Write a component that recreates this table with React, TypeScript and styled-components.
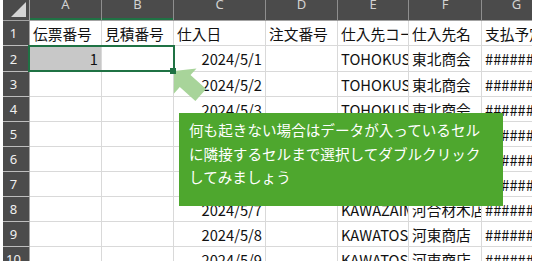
import React from "react";
import styled, { createGlobalStyle } from "styled-components";

const GlobalStyle = createGlobalStyle`
  html, body {
    margin: 0;
    padding: 0;
    background: #ffffff;
  }
  body {
    width: 538px;
    height: 266px;
    overflow: hidden;
  }
`;

const GREEN = "#1f7244";
const HEAD_BG = "#4b4b4b";
const GRID = "#d9d9d9";

const Page = styled.div`
  width: 538px;
  height: 266px;
  padding-left: 3px;
  box-sizing: border-box;
`;

const Sheet = styled.div`
  position: relative;
  width: 529px;
  height: 261px;
  overflow: hidden;
  display: grid;
  grid-template-columns: 27px 72px 72px 92px 72px 71px 73px 70px;
  grid-template-rows: 21px 25px 26px repeat(8, 25px);
  font-family: "Noto Sans CJK JP", "Noto Sans", sans-serif;
`;

const Corner = styled.div`
  box-sizing: border-box;
  background: ${HEAD_BG};
  border-right: 1px solid #a3a3a3;
  border-bottom: 1px solid #a3a3a3;
  display: flex;
  align-items: flex-end;
  justify-content: flex-end;
  padding: 0 3px 3px 0;
`;

const SelectAll = styled.span`
  width: 0;
  height: 0;
  border-left: 15px solid transparent;
  border-bottom: 15px solid #d4d4d4;
`;

const ColHead = styled.div<{ $active?: boolean }>`
  box-sizing: border-box;
  background: ${HEAD_BG};
  border-right: 1px solid #8e8e8e;
  border-bottom: 1px solid #a3a3a3;
  box-shadow: ${(p) => (p.$active ? `inset 0 -2px 0 ${GREEN}` : "none")};
  color: #d2d2d2;
  font-family: "Noto Sans", sans-serif;
  font-size: 13px;
  line-height: 13px;
  text-align: center;
  overflow: hidden;
  & > span {
    display: block;
    margin-top: -2px;
  }
`;

const RowHead = styled.div`
  box-sizing: border-box;
  background: ${HEAD_BG};
  border-right: 1px solid #a3a3a3;
  border-bottom: 1px solid #bdbdbd;
  color: #f0f0f0;
  font-family: "Noto Sans", sans-serif;
  font-size: 13px;
  display: flex;
  align-items: center;
  justify-content: center;
  padding-right: 5px;
`;

const Cell = styled.div<{ $align?: "left" | "right"; $fill?: string }>`
  box-sizing: border-box;
  background: ${(p) => p.$fill ?? "#ffffff"};
  border-right: 1px solid ${GRID};
  border-bottom: 1px solid ${GRID};
  color: #111111;
  font-size: 14.7px;
  white-space: nowrap;
  overflow: hidden;
  display: flex;
  align-items: center;
  justify-content: ${(p) => (p.$align === "right" ? "flex-end" : "flex-start")};
  padding: 0 3px;
`;

/* selection rectangle and fill handle float over the A2:B2 cells */
const Selection = styled.div`
  position: absolute;
  left: 25px;
  top: 45px;
  width: 147px;
  height: 27px;
  box-sizing: border-box;
  border: 2px solid ${GREEN};
  pointer-events: none;
`;

const FillHandle = styled.span`
  position: absolute;
  right: -3px;
  bottom: -4px;
  width: 6px;
  height: 6px;
  background: ${GREEN};
`;

const Pointer = styled.svg`
  position: absolute;
  left: 160px;
  top: 60px;
  width: 60px;
  height: 50px;
  overflow: visible;
`;

const Callout = styled.div`
  position: absolute;
  left: 176px;
  top: 113px;
  width: 324px;
  height: 93px;
  box-sizing: border-box;
  padding: 5px 0 0 10px;
  background: #4ea72e;
  color: #ffffff;
  font-size: 14.6px;
  line-height: 23.5px;
`;

const Line = styled.div`
  white-space: nowrap;
`;

type Row = {
  a?: string;
  b?: string;
  c?: string;
  d?: string;
  e?: string;
  f?: string;
  g?: string;
};

const header: Row = {
  a: "伝票番号",
  b: "見積番号",
  c: "仕入日",
  d: "注文番号",
  e: "仕入先コード",
  f: "仕入先名",
  g: "支払予定日",
};

const suppliers: [string, string][] = [
  ["TOHOKUSHOKAI", "東北商会"],
  ["TOHOKUSHOKAI", "東北商会"],
  ["TOHOKUSHOKAI", "東北商会"],
  ["TOHOKUSHOKAI", "東北商会"],
  ["TOHOKUSHOKAI", "東北商会"],
  ["TOHOKUSHOKAI", "東北商会"],
  ["KAWAZAIMOKU", "河合材木店"],
  ["KAWATOSHOTEN", "河東商店"],
  ["KAWATOSHOTEN", "河東商店"],
];

const rows: Row[] = [
  header,
  ...suppliers.map(([code, name], i) => ({
    a: i === 0 ? "1" : "",
    b: "",
    c: `2024/5/${i + 1}`,
    d: "",
    e: code,
    f: name,
    g: "##########",
  })),
];

const letters = ["A", "B", "C", "D", "E", "F", "G"];
const keys: (keyof Row)[] = ["a", "b", "c", "d", "e", "f", "g"];

export default function App() {
  return (
    <>
      <GlobalStyle />
      <Page>
        <Sheet>
          <Corner>
            <SelectAll />
          </Corner>
          {letters.map((l, i) => (
            <ColHead key={l} $active={i < 2}>
              <span>{l}</span>
            </ColHead>
          ))}
          {rows.map((row, r) => (
            <React.Fragment key={r}>
              <RowHead>{r + 1}</RowHead>
              {keys.map((k) => {
                const numeric = r > 0 && (k === "a" || k === "c");
                const fill = r === 1 && k === "a" ? "#c8c8c8" : undefined;
                return (
                  <Cell key={k} $align={numeric ? "right" : "left"} $fill={fill}>
                    {row[k]}
                  </Cell>
                );
              })}
            </React.Fragment>
          ))}

          <Pointer viewBox="0 0 60 50">
            <polygon
              points="11,11 33.5,8.4 27.5,15.1 43.1,29.1 32.4,41 16.8,27 10.8,33.7"
              fill="#a8d49a"
            />
          </Pointer>
          <Selection>
            <FillHandle />
          </Selection>

          <Callout>
            <Line>何も起きない場合はデータが入っているセル</Line>
            <Line>に隣接するセルまで選択してダブルクリック</Line>
            <Line>してみましょう</Line>
          </Callout>
        </Sheet>
      </Page>
    </>
  );
}
